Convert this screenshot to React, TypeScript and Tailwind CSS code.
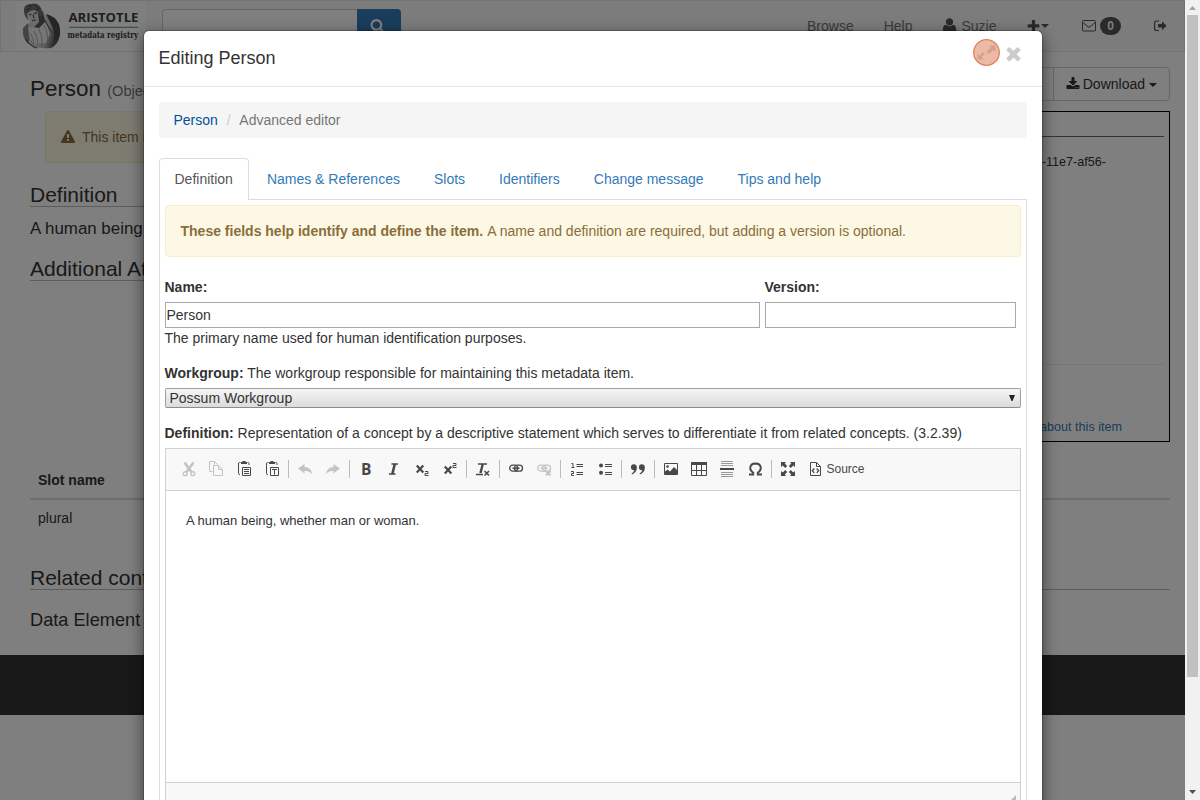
import React from "react";

type P = { children?: React.ReactNode; className?: string };

/* ---------- Icon glyphs ---------- */
const glyphs = {
  search:
    "M1216 832q0-185-131.5-316.5t-316.5-131.5-316.5 131.5-131.5 316.5 131.5 316.5 316.5 131.5 316.5-131.5 131.5-316.5zm512 832q0 52-38 90t-90 38q-54 0-90-38l-343-342q-179 124-399 124-143 0-273.5-55.5t-225-150-150-225-55.5-273.5 55.5-273.5 150-225 225-150 273.5-55.5 273.5 55.5 225 150 150 225 55.5 273.5q0 220-124 399l343 343q37 37 37 90z",
  user:
    "M1600 1405q0 120-73 189.5t-194 69.5h-874q-121 0-194-69.5t-73-189.5q0-53 3.500-103.500t14-109 26.500-108.500 43-97.500 62-81 85.500-53.500 111.500-20q9 0 42 21.500t74.500 48 108 48 133.500 21.500 133.500-21.500 108-48 74.500-48 42-21.500q61 0 111.500 20t85.500 53.500 62 81 43 97.500 26.500 108.500 14 109 3.500 103.500zm-320-893q0 159-112.500 271.500t-271.500 112.500-271.500-112.500-112.500-271.500 112.500-271.500 271.500-112.500 271.500 112.500 112.500 271.500z",
  plus:
    "M1600 736v192q0 40-28 68t-68 28h-416v416q0 40-28 68t-68 28h-192q-40 0-68-28t-28-68v-416h-416q-40 0-68-28t-28-68v-192q0-40 28-68t68-28h416v-416q0-40 28-68t68-28h192q40 0 68 28t28 68v416h416q40 0 68 28t28 68z",
  download:
    "M1344 1344q0-26-19-45t-45-19-45 19-19 45 19 45 45 19 45-19 19-45zm256 0q0-26-19-45t-45-19-45 19-19 45 19 45 45 19 45-19 19-45zm128-224v320q0 40-28 68t-68 28h-1472q-40 0-68-28t-28-68v-320q0-40 28-68t68-28h465l135 136q58 56 136 56t136-56l136-136h464q40 0 68 28t28 68zm-325-569q17 41-14 70l-448 448q-18 19-45 19t-45-19l-448-448q-31-29-14-70 17-39 59-39h256v-448q0-26 19-45t45-19h256q26 0 45 19t19 45v448h256q42 0 59 39z",
  times:
    "M1490 1322q0 40-28 68l-136 136q-28 28-68 28t-68-28l-294-294-294 294q-28 28-68 28t-68-28l-136-136q-28-28-28-68t28-68l294-294-294-294q-28-28-28-68t28-68l136-136q28-28 68-28t68 28l294 294 294-294q28-28 68-28t68 28l136 136q28 28 28 68t-28 68l-294 294 294 294q28 28 28 68z",
  warning:
    "M1024 1375v-190q0-14-9.500-23.500t-22.500-9.500h-192q-13 0-22.500 9.500t-9.500 23.500v190q0 14 9.500 23.500t22.500 9.500h192q13 0 22.500-9.500t9.500-23.500zm-2-374l18-459q0-12-10-19-13-11-24-11h-220q-11 0-24 11-10 7-10 21l17 457q0 10 10 16.500t24 6.500h185q14 0 23.500-6.500t10.500-16.500zm-14-934l768 1408q35 63-2 126-17 29-46.500 46t-63.500 17h-1536q-34 0-63.500-17t-46.500-46q-37-63-2-126l768-1408q17-31 47-49t65-18 65 18 47 49z",
};

function Glyph({ name, className }: { name: keyof typeof glyphs; className: string }) {
  return (
    <svg viewBox="0 0 1792 1792" fill="currentColor" className={`shrink-0 ${className}`}>
      <path d={glyphs[name]} />
    </svg>
  );
}

function Caret({ className = "" }: P) {
  return (
    <svg viewBox="0 0 8 4" fill="currentColor" className={`h-1 w-2 shrink-0 ${className}`}>
      <path d="M0 0h8L4 4z" />
    </svg>
  );
}

/* ---------- Site header ---------- */
function Logo() {
  return (
    <svg viewBox="0 0 130 50" className="ml-[15px] h-[50px] w-[130px] shrink-0 bg-white">
      <defs>
        <linearGradient id="torso" x1="0" y1="0" x2="1" y2="0.3">
          <stop offset="0" stopColor="#a0a0a0" />
          <stop offset="0.350" stopColor="#e8e8e8" />
          <stop offset="0.750" stopColor="#c0c0c0" />
          <stop offset="1" stopColor="#555" />
        </linearGradient>
      </defs>
      <path d="M26 13q8 1 13 6 6 6 5 15-2 10-9 13-8 1-16-1-8-3-10-10-1-7 2-12z" fill="url(#torso)" />
      <path d="M30 13q9 2 13 10 2 8-1 14l-4 3q1-10-3-17z" fill="#4a4a4a" />
      <path d="M12 22l-5 5q-1 10 5 16l2-8z" fill="#888" />
      <path d="M12 25q5 5 13 0l4-6 6 11-5 12-13 1-4-8z" fill="#ececec" />
      <path d="M10 8q5-5 11-2 5 2 5 8l2 7-7 5q-5 0-7-5-4-5-4-13z" fill="#d8d8d8" />
      <path d="M22 12l5-2 2 11-6 6-5-1 5-5z" fill="#5a5a5a" />
      <path d="M8 10Q7 4 14 3q8-2 11 4l2 6-3 3-2-5-4-2-4 1-3 3 1 6q-4-4-4-9z" fill="#707070" />
      <path d="M12 5q3-1 4 1m2-2q3 0 4 3M10 9l4-2m6 2l4-2" stroke="#444" fill="none" />
      <path d="M13 14l2.500-.7m2.500-.6l3-1m-4 2l1 3.500m-2 2.500l4-1" stroke="#444" strokeWidth="1.100" fill="none" />
      <path d="M14 32q4 5 4 12m0-14q4 6 4 15m1-17q4 8 3 17m2-21q5 9 3 20m1-19q4 8 2 17M12 36l5 7" stroke="#999" strokeWidth=".8" fill="none" />
      <path d="M28 18l8 14M10 38q4 7 11 9" stroke="#555" strokeWidth="1.200" fill="none" />
      <text x="52.500" y="21" textLength="70" lengthAdjust="spacingAndGlyphs" className="fill-[#404040] font-['Open_Sans',sans-serif] text-[12.500px] leading-4 font-bold">ARISTOTLE</text>
      <path d="M53 26.300h69" stroke="#4f8f8f" strokeWidth="1" />
      <text x="51.500" y="37" textLength="70.500" lengthAdjust="spacingAndGlyphs" className="fill-[#404040] font-['DejaVu_Serif',serif] text-[9.500px] font-bold">metadata registry</text>
    </svg>
  );
}

function SiteHeader() {
  return (
    <header className="flex h-[52px] items-start border border-[#e7e7e7] bg-[#f8f8f8] text-[#777]">
      <Logo />
      <div className="mt-2 ml-4 flex h-[34px]">
        <div className="w-[195px] rounded-l border border-r-0 border-[#ccc] bg-white" />
        <div className="flex w-11 justify-center rounded-r bg-[#337ab7] pt-[9px] pr-[3px] text-white">
          <Glyph name="search" className="h-[15px] w-[15px]" />
        </div>
      </div>
      <nav className="ml-auto flex h-[50px] items-center pr-[17px]">
        <span className="mr-[30px]">Browse</span>
        <span className="mr-[29px]">Help</span>
        <Glyph name="user" className="mr-[3px] mb-0.5 h-[17px] w-[17px] text-[#555]" />
        <span className="mr-[29px]">Suzie</span>
        <Glyph name="plus" className="mr-0 h-[15px] w-[15px] text-[#555]" />
        <Caret className="mr-[33.500px] text-[#555]" />
        <svg viewBox="0 0 14 12" className="mr-1 h-3 w-[14px]" fill="none" stroke="#555">
          <rect x=".5" y=".5" width="13" height="10.500" rx="1" />
          <path d="M.8 2.500L6 6.800q1 .7 2 0l5.200-4.300" />
        </svg>
        <span className="mr-[33px] flex h-[18px] w-[21px] items-center justify-center rounded-[10px] bg-[#555] text-xs font-bold text-[#f8f8f8]">0</span>
        <svg viewBox="0 0 13 12" className="mb-px h-3 w-[13px]" fill="none" stroke="#555">
          <path d="M5 1H2.500Q.6 1 .6 3v5.500q0 2 1.900 2H5" strokeWidth="1.200" />
          <path d="M4 4h4V1.200L12.500 5.800 8 10.300V7.600H4z" fill="#555" stroke="none" />
        </svg>
      </nav>
    </header>
  );
}

function SectionTitle({ children }: P) {
  return <h2 className="h-6 border-b border-[#bbb] text-[21px] leading-[23px] whitespace-nowrap">{children}</h2>;
}

/* ---------- Item page ---------- */
function ItemPage() {
  return (
    <div className="h-[800px] bg-white">
      <SiteHeader />
      <main className="h-[603px] pt-[15px] pr-[15px] pl-[30px]">
        <div className="flex h-11 items-start justify-between">
          <h1 className="pt-[7px] text-[22.400px] leading-[30px]">
            Person <small className="text-[14.600px] text-[#777]">(Object Class)</small>
          </h1>
          <div className="flex h-[34px] rounded border border-[#ccc] bg-white">
            <span className="w-[120px] border-r border-[#ccc]" />
            <span className="flex items-center pr-3 pl-3">
              <Glyph name="download" className="mr-[3px] h-[14px] w-[14px]" />
              Download
              <Caret className="ml-1 mt-px" />
            </span>
          </div>
        </div>
        <div className="flex h-[331px] justify-between">
          <div className="w-[745px]">
            <div className="ml-[15px] flex h-[52px] items-center rounded border border-[#faebcc] bg-[#fcf8e3] px-[15px] text-[#8a6d3b]">
              <Glyph name="warning" className="mr-[7px] h-[14px] w-[14px]" />
              This item is not registered
            </div>
            <div className="mt-5">
              <SectionTitle>Definition</SectionTitle>
            </div>
            <p className="pt-2.5 text-[16.900px] leading-6">A human being, whether man or woman.</p>
            <div className="mt-4">
              <SectionTitle>Additional Attributes</SectionTitle>
            </div>
          </div>
          <aside className="flex w-[360px] flex-col border border-black px-[5px] text-right text-[12.600px] leading-[18px]">
            <div className="h-[25px] border-b border-[#666]" />
            <div className="h-[228px] border-b border-[#eee] pt-4 pr-[58px]">6bbd2d21-b4c8-11e7-af56-</div>
            <div className="pt-[53px] pr-[42px] text-[#337ab7]">More about this item</div>
          </aside>
        </div>
        <div className="mt-5 h-[38px] border-b-2 border-[#ddd] pt-2 pl-2 font-bold">Slot name</div>
        <div className="h-[37px] pt-2 pl-2">plural</div>
        <div className="mt-[29px]">
          <SectionTitle>Related content</SectionTitle>
        </div>
        <h3 className="mt-5 text-[18.200px] leading-5">Data Element Concepts</h3>
      </main>
      <footer className="h-[60px] bg-[#333]" />
    </div>
  );
}

/* ---------- Editor toolbar ---------- */
function Tool({ children, dim }: P & { dim?: boolean }) {
  return (
    <span className={`flex w-7 shrink-0 justify-center ${dim ? "text-[#c4c4c4]" : "text-[#484848]"}`}>
      <svg viewBox="0 0 16 16" className="h-4 w-4" fill="none" stroke="currentColor">
        {children}
      </svg>
    </span>
  );
}

function Sep() {
  return <span className="mx-0.5 h-[18px] w-px shrink-0 bg-[#bcbcbc]" />;
}

const clipboard = (
  <>
    <path d="M4.500 1.500H3.500Q2.500 1.500 2.500 3v9.500q0 1 1.500 1M11.500 1.500h.5q1 0 1 1v1.500" />
    <path d="M5 1h1.500V0h3v1H11v2H5z" fill="currentColor" stroke="none" />
    <path d="M6.500 6.500h8v8h-8z" />
  </>
);

const chain = (
  <>
    <rect x="1.700" y="4.200" width="8" height="6" rx="3" strokeWidth="1.300" />
    <rect x="6.500" y="4.200" width="8" height="6" rx="3" strokeWidth="1.300" />
    <path d="M4.500 7.200h7" strokeWidth="1.500" />
  </>
);

const two = "h3v2h-3v2h3.500";

function Toolbar() {
  return (
    <div className="flex h-[42px] items-center border-b border-[#d1d1d1] bg-[#f8f8f8] pb-px pl-[8.500px]">
      <Tool dim>
        <path d="M4.500 1.500L11.500 11M13.500 1.500L6.500 11" strokeWidth="2.600" />
        <circle cx="5.200" cy="12.700" r="1.900" strokeWidth="1.400" />
        <circle cx="12.800" cy="12.700" r="1.900" strokeWidth="1.400" />
      </Tool>
      <Tool dim>
        <path d="M4.500 10.500h-3V.5h5l3 3M6.500.5v3M5.500 4.500h5l4 4v6h-9zM10.500 4.500v4h4" />
      </Tool>
      <Tool>
        {clipboard}
        <path d="M8 8.500h5M8 10.500h5M8 12.500h5" />
      </Tool>
      <Tool>
        {clipboard}
        <path d="M8 8.500h5M10.500 8.500v5" />
      </Tool>
      <Sep />
      <Tool dim>
        <path d="M1 7.500L7.500 3v3q6.500 0 8 7.500-3-4-8-3.500v2.500z" fill="currentColor" stroke="none" />
      </Tool>
      <Tool dim>
        <path d="M15 7.500L8.500 3v3Q2 6 .5 13.500q3-4 8-3.500v2.500z" fill="currentColor" stroke="none" />
      </Tool>
      <Sep />
      <Tool>
        <text x="3" y="13.500" fill="currentColor" stroke="none" className="font-['Open_Sans',sans-serif] text-[15.500px] leading-4 font-bold">B</text>
      </Tool>
      <Tool>
        <path d="M5.500 3h6.500M3 13h6.500" strokeWidth="1.500" />
        <path d="M8.800 3L6.300 13" strokeWidth="2.600" />
      </Tool>
      <Tool>
        <path d="M2.800 4.500l6.500 7M9.300 4.500l-6.500 7" strokeWidth="2.200" />
        <path d={"M11 10.500" + two} />
      </Tool>
      <Tool>
        <path d="M2.800 5.500l6.500 7M9.300 5.500l-6.500 7" strokeWidth="2.200" />
        <path d={"M11 2.500" + two} />
      </Tool>
      <Sep />
      <Tool>
        <path d="M3 3h9M1 13.500h7" strokeWidth="1.400" />
        <path d="M7.800 3L5.500 12" strokeWidth="2.400" />
        <path d="M9.500 10l4.500 4.500M14 10l-4.500 4.500" strokeWidth="1.500" />
      </Tool>
      <Sep />
      <Tool>{chain}</Tool>
      <Tool dim>
        {chain}
        <path d="M10 10l4.500 4.500M14.500 10L10 14.500" strokeWidth="2" />
      </Tool>
      <Sep />
      <Tool>
        <path d="M2.500 2.500h1.500v4.500M2.500 6.500h3M7.500 3.500h6.500M7.500 5.500h6.500M7.500 11.500h6.500M7.500 13.500h6.500" />
        <path d="M2 10.500h2.500v2H2.500v2h2.500" />
      </Tool>
      <Tool>
        <circle cx="4" cy="4.500" r="2" fill="currentColor" stroke="none" />
        <circle cx="4" cy="11.700" r="2" fill="currentColor" stroke="none" />
        <path d="M8 3.500h7M8 5.500h7M8 11.500h7M8 13.500h7" />
      </Tool>
      <Sep />
      <Tool>
        <path d="M3.700 3.300q3.300.2 3.200 3.500Q6.700 11.500 2 13.500l-.4-1q2.400-1.500 2.600-3.300Q.9 9 .9 6.200q.1-2.700 2.800-2.900zM11.700 3.300q3.300.2 3.200 3.500-.2 4.700-4.900 6.700l-.4-1q2.400-1.500 2.600-3.300-3.300-.2-3.300-3 .1-2.700 2.800-2.900z" fill="currentColor" stroke="none" />
      </Tool>
      <Sep />
      <Tool>
        <path d="M1.500 2.500h13v11h-13z" />
        <circle cx="4.500" cy="5.500" r="1.300" fill="currentColor" stroke="none" />
        <path d="M2 13v-2.500l2.500-2 2.500 2 4-4.500 3 3v4z" fill="currentColor" stroke="none" />
      </Tool>
      <Tool>
        <path d="M0 1h16v3H0z" fill="currentColor" stroke="none" />
        <path d="M.5 2v12.500h15V2M5.500 4v10.500M10.500 4v10.500M.5 9.500h15" />
      </Tool>
      <Tool>
        <path d="M2 .5h12M2 2.500h12M2 4.500h12M2 11.500h12M2 13.500h12M2 15.500h12" className="stroke-[#999]" />
        <path d="M1 8h14" strokeWidth="2" />
      </Tool>
      <Tool>
        <path d="M2 13.500h4.200v-1.800Q3.200 9.800 3.200 6.800 3.500 2.600 8.500 2.500q5 .1 5.300 4.300 0 3-3 4.900v1.800H15" strokeWidth="1.900" />
      </Tool>
      <Sep />
      <Tool>
        <path d="M1 1h5L4.700 2.500l2.500 2.500-2 2-2.500-2.500L1 6zM15 1v5l-1.700-1.500L10.800 7l-2-2 2.500-2.500L10 1zM1 15v-5l1.700 1.500L5.200 9l2 2-2.500 2.500L6 15zM15 15h-5l1.300-1.500L8.800 11l2-2 2.500 2.500L15 10z" fill="currentColor" stroke="none" />
      </Tool>
      <Tool>
        <path d="M2.500 1.500h6l4 4v9h-10zM8.500 1.500v4h4" />
        <path d="M6.300 7.500L4.300 9.700l2 2.200M8.700 7.500l2 2.200-2 2.200" strokeWidth="1.300" />
      </Tool>
      <span className="-ml-[3.500px] text-xs text-[#484848]">Source</span>
    </div>
  );
}

/* ---------- Modal ---------- */
const tabs = ["Names & References", "Slots", "Identifiers", "Change message", "Tips and help"];

function EditorModal() {
  return (
    <div className="mx-auto mt-[30px] w-[900px] rounded-md border border-black/20 bg-white bg-clip-padding shadow-[0_5px_15px_rgba(0,0,0,0.5)]">
      <div className="flex h-14 items-start justify-between border-b border-[#e5e5e5] px-[15px]">
        <h4 className="mt-3.5 text-lg leading-[26px]">Editing Person</h4>
        <div className="mt-2 mr-[3px] flex items-start">
          <svg viewBox="0 0 28 28" className="h-7 w-7">
            <path d="M13.500 12.500L18 8.500 16 6.500H22.500V13l-2-2-4.500 4zM12 15l-3.500 3 2 2.500H4.500V14.500l2 2L10 13z" fill="#ccc" />
            <circle cx="13.500" cy="13.500" r="12.800" fill="rgba(219,117,77,0.5)" stroke="#dd845f" strokeWidth="1.300" />
          </svg>
          <Glyph name="times" className="mt-1 ml-[1.500px] h-[21px] w-[21px] text-[#ccc]" />
        </div>
      </div>
      <div className="p-[15px]">
        <div className="mb-5 flex h-9 items-center rounded bg-[#f5f5f5] px-[15px]">
          <span className="text-[#00529b]">Person</span>
          <span className="px-[8.800px] text-[#ccc]">/</span>
          <span className="text-[#777]">Advanced editor</span>
        </div>
        <div className="flex h-[42px] border-b border-[#ddd]">
          <span className="mr-0.5 h-[42px] rounded-t border border-b-0 border-[#ddd] bg-white px-[15px] py-2.5 text-[#555]">Definition</span>
          {tabs.map((t) => (
            <span key={t} className="mr-0.5 px-4 py-[11px] text-[#337ab7]">{t}</span>
          ))}
        </div>
        <div className="h-[700px] border-x border-[#ddd] p-[5px]">
          <div className="flex h-[52px] items-center rounded border border-[#faebcc] bg-[#fcf8e3] px-[15px] text-[#8a6d3b]">
            <span>
              <b className="mr-px">These fields help identify and define the item.</b> A name and definition are required, but adding a version is optional.
            </span>
          </div>
          <div className="mt-5 flex">
            <div className="w-[600px]">
              <label className="mb-[5px] block font-bold">Name:</label>
              <div className="flex h-[26px] w-[595px] items-center border border-[#a9a9a9] bg-white pl-px">Person</div>
              <p>The primary name used for human identification purposes.</p>
            </div>
            <div>
              <label className="mb-[5px] block font-bold">Version:</label>
              <div className="h-[26px] w-[251px] border border-[#a9a9a9] bg-white" />
            </div>
          </div>
          <p className="mt-[15px] mb-[5px]">
            <b>Workgroup:</b> The workgroup responsible for maintaining this metadata item.
          </p>
          <div className="flex h-5 items-center justify-between rounded-[2px] border border-[#a0a0a0] border-b-[#8c8c8c] bg-gradient-to-b from-[#f5f5f5] to-[#dcdcdc] pr-[5px] pl-1">
            Possum Workgroup
            <svg viewBox="0 0 6 6" className="h-1.5 w-1.5 fill-[#222]">
              <path d="M0 0h6L3.500 6h-1z" />
            </svg>
          </div>
          <p className="mt-[15px] mb-[5px]">
            <b>Definition:</b> Representation of a concept by a descriptive statement which serves to differentiate it from related concepts. (3.2.39)
          </p>
          <div className="border border-[#d1d1d1]">
            <Toolbar />
            <div className="h-[291px] py-5 pl-[20.500px] text-[13px] leading-[20.800px]">A human being, whether man or woman.</div>
            <div className="flex h-[30px] justify-end border-t border-[#d1d1d1] bg-[#f8f8f8] pt-3 pr-1">
              <svg viewBox="0 0 10 10" className="h-2.5 w-2.5 fill-[#bcbcbc]">
                <path d="M10 0v10H0z" />
              </svg>
            </div>
          </div>
        </div>
      </div>
    </div>
  );
}

function Scrollbar() {
  return (
    <div className="flex w-[15px] flex-col items-center justify-between bg-[#f1f1f1]">
      <svg viewBox="0 0 15 15" className="h-[15px] w-[15px] fill-[#a3a3a3]">
        <path d="M4 10l3.500-4 3.500 4z" />
      </svg>
      <div className="mb-auto h-[662px] w-[11px] bg-[#c1c1c1]" />
      <svg viewBox="0 0 15 15" className="h-[15px] w-[15px] fill-[#505050]">
        <path d="M4 5l3.500 4L11 5z" />
      </svg>
    </div>
  );
}

export default function App() {
  return (
    <div className="flex h-[800px] w-[1200px] overflow-hidden font-['Liberation_Sans',Arial,sans-serif] text-sm leading-5 text-[#333]">
      <div className="relative h-[800px] w-[1185px] overflow-hidden">
        <ItemPage />
        <div className="absolute inset-0 overflow-hidden bg-black/50">
          <EditorModal />
        </div>
      </div>
      <Scrollbar />
    </div>
  );
}
